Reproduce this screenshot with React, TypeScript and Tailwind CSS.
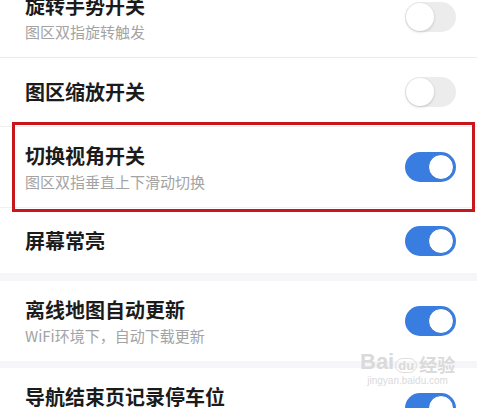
import React from 'react';

type Row = { title: string; sub?: string; on: boolean; h: string; pad?: string };

function Toggle({ on }: { on: boolean }) {
  return on ? (
    <div className="flex h-[30px] w-[51px] shrink-0 items-center justify-end rounded-full bg-[#3a7de0] pr-[2px]">
      <div className="h-[26px] w-[26px] rounded-full border border-[#2f6fcf] bg-white" />
    </div>
  ) : (
    <div className="flex h-[30px] w-[51px] shrink-0 items-center rounded-full bg-[#ececec] pl-[1px]">
      <div className="h-[28px] w-[28px] rounded-full bg-white shadow-[0_1px_3px_rgba(0,0,0,0.18)]" />
    </div>
  );
}

function SettingRow({ row }: { row: Row }) {
  return (
    <div className={`flex items-center justify-between bg-white pl-[25px] pr-[21px] ${row.h}`}>
      <div className={`flex flex-col ${row.pad ?? ''}`}>
        <span className="text-[20px] font-bold leading-[28px] text-[#1b1b1b]">{row.title}</span>
        {row.sub ? (
          <span className="mt-[1px] text-[15px] leading-[22px] text-[#a3a3a3]">{row.sub}</span>
        ) : null}
      </div>
      <Toggle on={row.on} />
    </div>
  );
}

export default function App() {
  return (
    <div
      className="relative h-[408px] w-[477px] overflow-hidden bg-white"
      style={{ fontFamily: '"Noto Sans CJK SC", "Noto Sans", sans-serif' }}
    >
      <div className="-mt-[23px] flex flex-col">
        <SettingRow row={{ title: '旋转手势开关', sub: '图区双指旋转触发', on: false, h: 'h-[80px]' }} />
        <div className="h-px bg-[#ebebeb]" />
        <SettingRow row={{ title: '图区缩放开关', on: false, h: 'h-[68px]' }} />
        <div className="h-px bg-[#f0f0f0]" />
        <SettingRow row={{ title: '切换视角开关', sub: '图区双指垂直上下滑动切换', on: true, h: 'h-[80px]' }} />
        <div className="h-px bg-[#f0f0f0]" />
        <SettingRow row={{ title: '屏幕常亮', on: true, h: 'h-[65px]' }} />
        <div className="h-[8px] bg-[#f6f6f8]" />
        <SettingRow row={{ title: '离线地图自动更新', sub: 'WiFi环境下，自动下载更新', on: true, h: 'h-[80px]' }} />
        <div className="h-[7px] bg-[#f6f6f8]" />
        <SettingRow row={{ title: '导航结束页记录停车位', on: true, h: 'h-[80px]', pad: 'mb-[23px]' }} />
      </div>

      {/* highlight annotation */}
      <div className="absolute left-[12px] top-[122px] h-[90px] w-[463px] border-[3px] border-[#c8161d]" />

      {/* watermark */}
      <div className="pointer-events-none absolute left-[360px] top-[351px] flex flex-col items-center text-[#dadada]">
        <div className="flex items-end leading-none" style={{ fontFamily: '"Liberation Sans", sans-serif' }}>
          <span className="text-[22px] font-bold">Bai</span>
          <span className="ml-[1px] rounded-full border border-[#dddddd] px-[2px] text-[13px] font-bold">du</span>
          <span className="ml-[2px] text-[18px] font-bold" style={{ fontFamily: '"Noto Sans CJK SC", sans-serif' }}>经验</span>
        </div>
        <span className="mt-[3px] text-[10px] leading-none" style={{ fontFamily: '"Liberation Sans", sans-serif' }}>jingyan.baidu.com</span>
      </div>
    </div>
  );
}
